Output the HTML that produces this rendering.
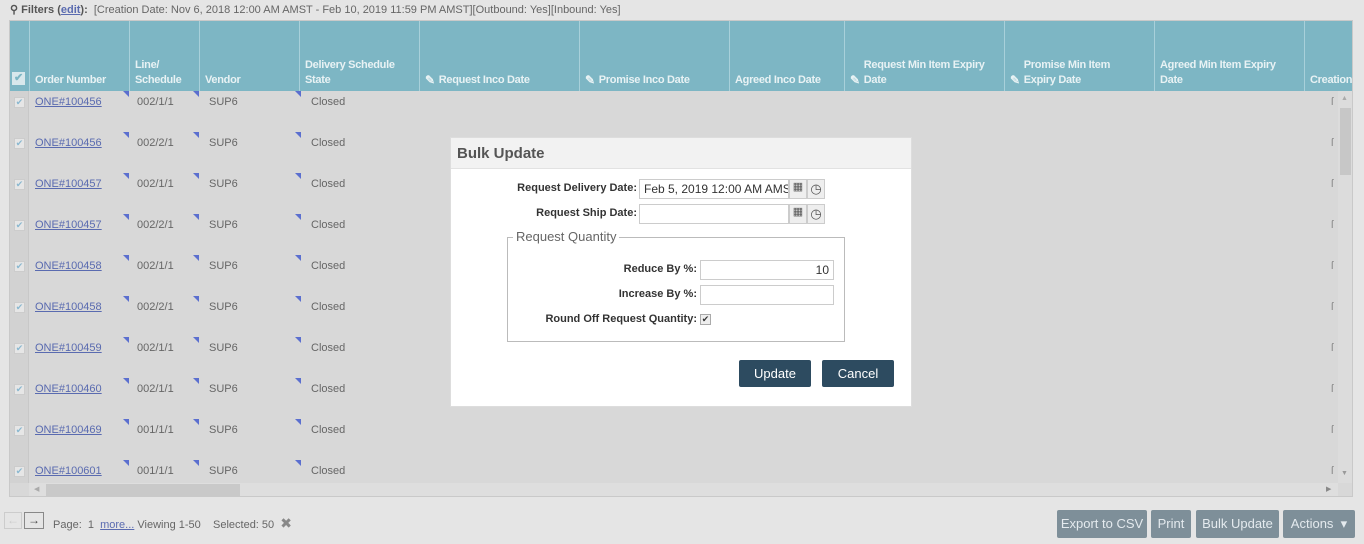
<!DOCTYPE html>
<html><head><meta charset="utf-8"><style>
*{box-sizing:border-box;margin:0;padding:0}
body{width:1364px;height:544px;background:#e5e5e5;font-family:"Liberation Sans",sans-serif;font-size:11px;color:#555;position:relative;overflow:hidden}
.abs{position:absolute}
.filters{left:10px;top:3px;font-size:11px;color:#666}
.filters b{color:#555}
.filters a{color:#5a6bb0;text-decoration:underline;font-weight:bold}
.tbl{left:9px;top:20px;width:1344px;height:477px;background:#d8d8d8;border:1px solid #c9c9c9;overflow:hidden}
.hdr{left:0;top:0;width:1344px;height:70px;background:#7db6c4}
.hc{position:absolute;top:0;height:70px;border-left:1px solid #a8d0da;color:#e8f2f4;font-weight:bold;font-size:11px;letter-spacing:-0.3px;padding:0 5px;display:flex;align-items:flex-end;padding-bottom:3px;line-height:15px;white-space:nowrap}
.row{position:absolute;left:0;width:1330px;height:41px}
.cell{position:absolute;top:5px;font-size:11px;color:#666}
.cell a{color:#5a6bb0;text-decoration:underline}
.tri{position:absolute;top:0;width:0;height:0;border-top:6px solid #5b6fcf;border-left:6px solid transparent}
.chk{position:absolute;left:4px;top:6px;width:11px;height:11px;background:#e6e6e6;border:1px solid #ccc;color:#8ab8d0;font-size:9px;line-height:9px;text-align:center}
.pen{display:inline-block;margin-right:4px;font-size:12px}
.dlg{left:450px;top:137px;width:462px;height:270px;background:#fff;border:1px solid #ddd}
.dt{height:31px;background:#f2f2f2;border-bottom:1px solid #e2e2e2;font-size:15px;font-weight:bold;color:#555;padding:7px 6px}
.lbl{font-weight:bold;font-size:11px;color:#333;text-align:right}
.inp{border:1px solid #ccc;background:#fff;height:20px;font-size:12px;color:#333;padding:2px 4px}
.ib{border:1px solid #ccc;background:#eee;width:18px;height:20px}
.btn{background:#2d4b60;color:#fff;font-size:13px;text-align:center;line-height:27px;height:27px;border-radius:2px}
.gb{background:#7e8f99;color:#e4eaee;font-size:13px;text-align:center;line-height:28px;height:28px;top:510px;border-radius:2px}
</style></head><body>
<div class="abs filters"><b>&#9906;</b> <b>Filters (<a>edit</a>):</b> &nbsp;[Creation Date: Nov 6, 2018 12:00 AM AMST - Feb 10, 2019 11:59 PM AMST][Outbound: Yes][Inbound: Yes]</div>
<div class="abs tbl">
 <div class="abs hdr">
  <div class="hc" style="left:0;width:19px;border-left:none;padding:0 2px 6px"><span style="display:inline-block;width:13px;height:13px;background:#d8e8ec;color:#7db6c4;font-size:11px;line-height:13px;text-align:center">✔</span></div>
  <div class="hc" style="left:19px;width:100px">Order Number</div>
  <div class="hc" style="left:119px;width:70px">Line/<br>Schedule</div>
  <div class="hc" style="left:189px;width:100px">Vendor</div>
  <div class="hc" style="left:289px;width:120px">Delivery Schedule<br>State</div>
  <div class="hc" style="left:409px;width:160px"><span class="pen">✎</span>Request Inco Date</div>
  <div class="hc" style="left:569px;width:150px"><span class="pen">✎</span>Promise Inco Date</div>
  <div class="hc" style="left:719px;width:115px">Agreed Inco Date</div>
  <div class="hc" style="left:834px;width:160px"><span class="pen">✎</span><span>Request Min Item Expiry<br>Date</span></div>
  <div class="hc" style="left:994px;width:150px"><span class="pen">✎</span><span>Promise Min Item<br>Expiry Date</span></div>
  <div class="hc" style="left:1144px;width:150px">Agreed Min Item Expiry<br>Date</div>
  <div class="hc" style="left:1294px;width:60px">Creation</div>
 </div>
 <div class="abs" style="left:0;top:70px;width:19px;height:392px;background:#d2d2d2;border-right:1px solid #c8c8c8"></div>
 <div id="rows"></div>
 <div class="abs" style="left:1328px;top:70px;width:14px;height:392px;background:#dcdcdc"><div class="abs" style="left:2px;top:17px;width:11px;height:67px;background:#c7c7c7"></div><div class="abs" style="left:3px;top:4px;font-size:7px;color:#aaa">▲</div><div class="abs" style="left:3px;top:379px;font-size:7px;color:#999">▼</div></div>
 <div class="abs" style="left:19px;top:462px;width:1309px;height:14px;background:#dedede"><div class="abs" style="left:17px;top:1px;width:194px;height:12px;background:#c9c9c9"></div><div class="abs" style="left:5px;top:2px;font-size:7px;color:#aaa">◀</div><div class="abs" style="left:1297px;top:2px;font-size:7px;color:#888">▶</div></div>
</div>
<div class="abs dlg">
 <div class="dt">Bulk Update</div>
 <div class="abs lbl" style="left:0;top:44px;width:186px">Request Delivery Date:</div>
 <div class="abs inp" style="left:188px;top:41px;width:150px;overflow:hidden;white-space:nowrap">Feb 5, 2019 12:00 AM AMST</div>
 <div class="abs ib" style="left:338px;top:41px;font-size:11px;text-align:center">▦</div><div class="abs ib" style="left:356px;top:41px;font-size:13px;text-align:center;line-height:17px">◷</div>
 <div class="abs lbl" style="left:0;top:69px;width:186px">Request Ship Date:</div>
 <div class="abs inp" style="left:188px;top:66px;width:150px"></div>
 <div class="abs ib" style="left:338px;top:66px;font-size:11px;text-align:center">▦</div><div class="abs ib" style="left:356px;top:66px;font-size:13px;text-align:center;line-height:17px">◷</div>
 <div class="abs" style="left:56px;top:99px;width:338px;height:105px;border:1px solid #bbb"></div>
 <div class="abs" style="left:62px;top:91px;background:#fff;padding:0 3px;font-size:13px;color:#666">Request Quantity</div>
 <div class="abs lbl" style="left:0;top:125px;width:246px">Reduce By %:</div>
 <div class="abs inp" style="left:249px;top:122px;width:134px;text-align:right">10</div>
 <div class="abs lbl" style="left:0;top:150px;width:246px">Increase By %:</div>
 <div class="abs inp" style="left:249px;top:147px;width:134px"></div>
 <div class="abs lbl" style="left:0;top:175px;width:246px">Round Off Request Quantity:</div>
 <div class="abs" style="left:249px;top:176px;width:11px;height:11px;border:1px solid #aaa;background:#eee;font-size:9px;line-height:9px;text-align:center;color:#333">✔</div>
 <div class="abs btn" style="left:288px;top:222px;width:72px">Update</div>
 <div class="abs btn" style="left:371px;top:222px;width:72px">Cancel</div>
</div>
<div class="abs" style="left:4px;top:512px;width:18px;height:17px;border:1px solid #ccc;color:#ccc;text-align:center;font-size:12px;line-height:15px">←</div>
<div class="abs" style="left:24px;top:512px;width:20px;height:17px;border:1px solid #888;color:#444;text-align:center;font-size:12px;line-height:15px;font-weight:bold">→</div>
<div class="abs" style="left:53px;top:515px;color:#666">Page: &nbsp;1 &nbsp;<span style="color:#5a6bb0;text-decoration:underline">more...</span> Viewing 1-50 &nbsp;&nbsp;&nbsp;Selected: 50 &nbsp;<span style="font-size:14px;color:#888">✖</span></div>
<div class="abs gb" style="left:1057px;width:90px">Export to CSV</div>
<div class="abs gb" style="left:1151px;width:40px">Print</div>
<div class="abs gb" style="left:1196px;width:83px">Bulk Update</div>
<div class="abs gb" style="left:1283px;width:72px">Actions &nbsp;▾</div>
<script>
var d=[["ONE#100456","002/1/1"],["ONE#100456","002/2/1"],["ONE#100457","002/1/1"],["ONE#100457","002/2/1"],["ONE#100458","002/1/1"],["ONE#100458","002/2/1"],["ONE#100459","002/1/1"],["ONE#100460","002/1/1"],["ONE#100469","001/1/1"],["ONE#100601","001/1/1"]];
var h="";d.forEach(function(r,i){var t=70+i*41;h+='<div class="row" style="top:'+t+'px"><div class="chk">✔</div><div class="cell" style="left:25px"><a>'+r[0]+'</a></div><div class="tri" style="left:113px"></div><div class="cell" style="left:127px">'+r[1]+'</div><div class="tri" style="left:183px"></div><div class="cell" style="left:199px">SUP6</div><div class="tri" style="left:285px"></div><div class="cell" style="left:301px">Closed</div><div class="cell" style="left:1321px;color:#888">ſ</div></div>';});
document.getElementById("rows").innerHTML=h;
</script>
</body></html>
